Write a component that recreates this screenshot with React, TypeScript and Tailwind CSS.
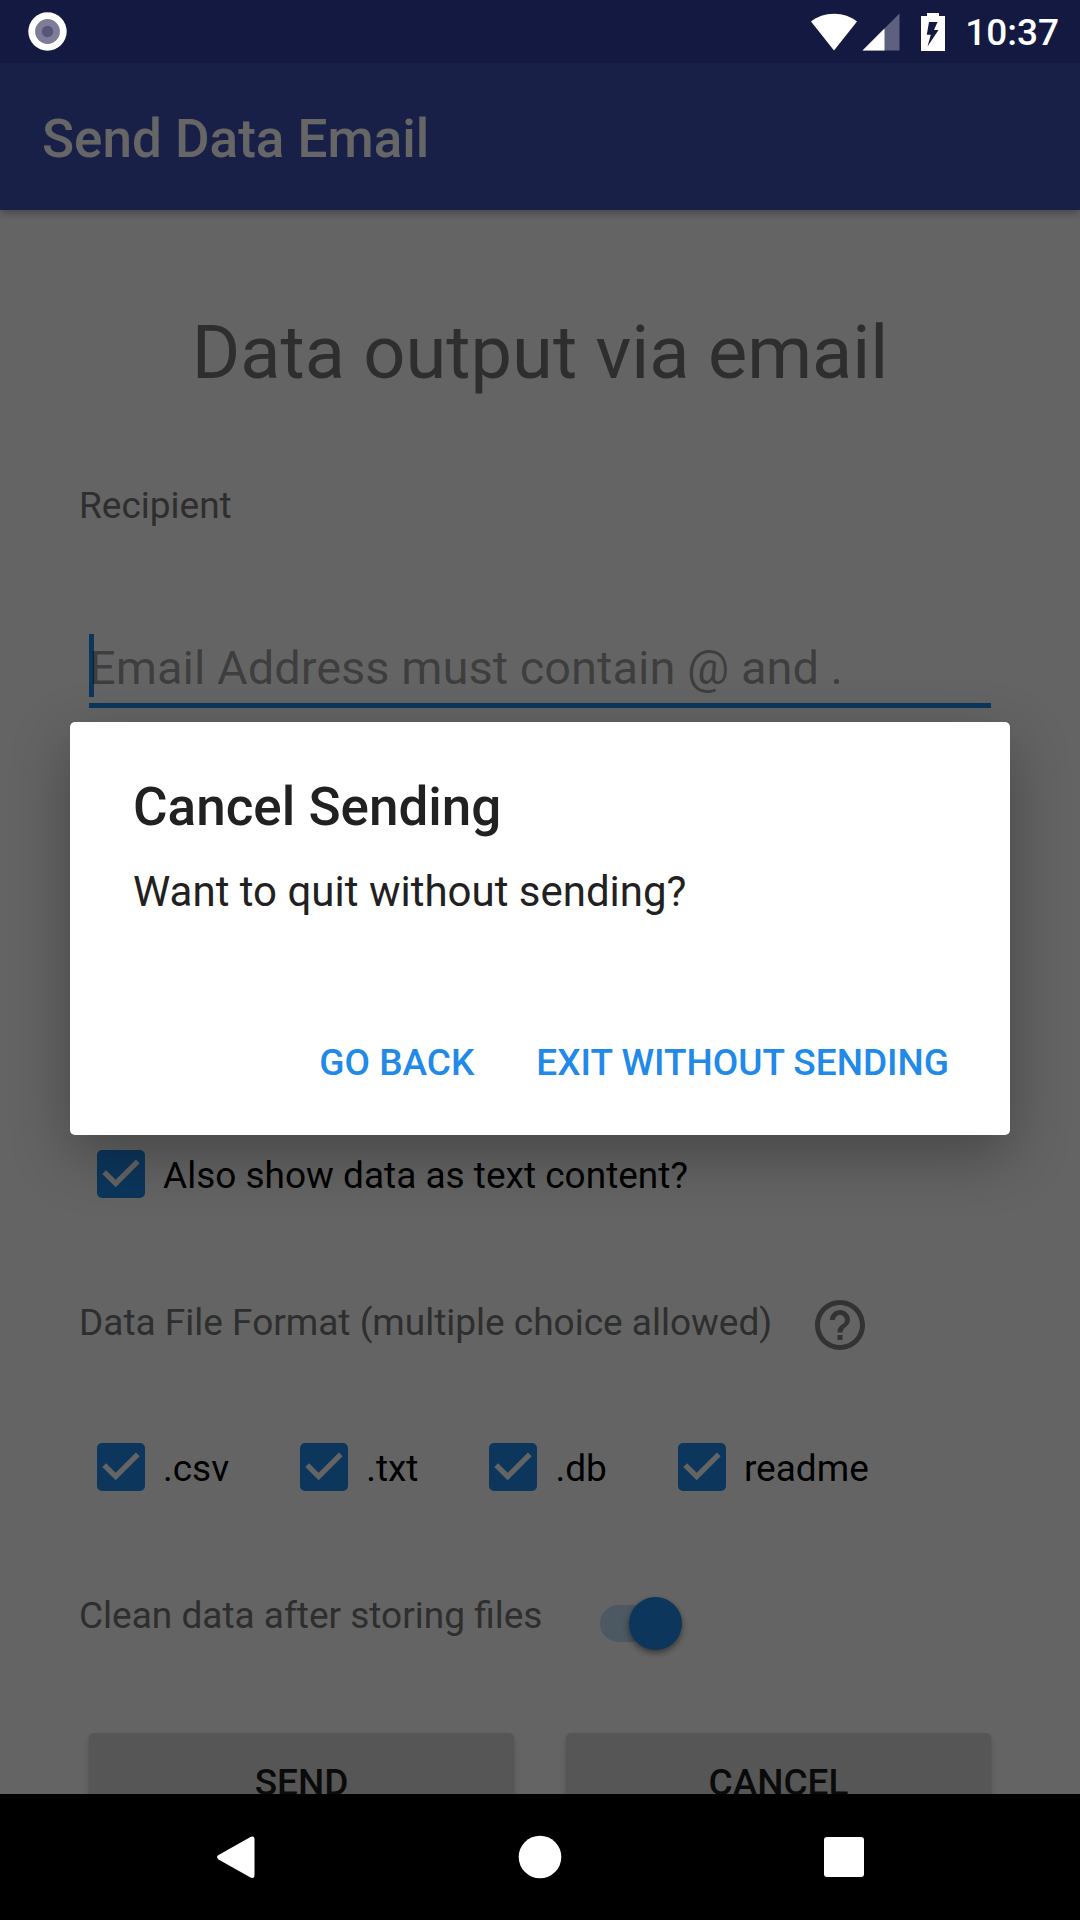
import { useState } from "react";

function StatusBar() {
  return (
    <header className="flex h-[63px] shrink-0 items-center justify-between bg-[#131940] pl-7 pr-[21px] text-white">
      <svg className="size-[39px]" viewBox="0 0 39 39" aria-hidden="true">
        <circle cx="19.5" cy="19.5" r="19.2" fill="#fff" />
        <circle cx="19.5" cy="19.5" r="12.4" fill="#7d7d97" />
        <circle cx="19.5" cy="19.5" r="5.7" fill="#555679" />
      </svg>
      <div className="flex items-center">
        <svg className="mr-1 h-[38px] w-[48px]" viewBox="0 0 48 38" aria-hidden="true">
          <path d="M1 8.6 C7 3.8 15 .8 24 .8 C33 .8 41 3.8 47 8.6 L24 37.6Z" fill="#fff" />
        </svg>
        <svg className="mr-[21px] size-[38px]" viewBox="0 0 38 38" aria-hidden="true">
          <path d="M37.5 .5V37.5H.5Z" fill="#5e6080" />
          <path d="M22.5 15.5V37.5H.5Z" fill="#fff" />
        </svg>
        <svg className="mr-5 h-[38px] w-[24px]" viewBox="0 0 24 38" aria-hidden="true">
          <path d="M6 0H18V3H24V38H0V3H6Z" fill="#fff" />
          <path d="M8 9H16.5L13 17H17.5L6.5 33.5L9.8 21.8H5.8Z" fill="#131940" />
        </svg>
        <span className="pt-[3px] text-[37px] font-medium leading-[44px]">10:37</span>
      </div>
    </header>
  );
}

function CheckOption({ label }: { label: string }) {
  const [checked, setChecked] = useState(true);
  return (
    <label className="flex h-12 items-start gap-[18px] text-[37px] leading-[52px] text-black">
      <span className="relative size-12 shrink-0">
        <input
          type="checkbox"
          checked={checked}
          onChange={() => setChecked(!checked)}
          className="block size-12 appearance-none rounded-[5px] border-[5px] border-[#737373] checked:border-[#1e88e5] checked:bg-[#1e88e5]"
        />
        {checked && (
          <svg className="pointer-events-none absolute inset-0 size-12" viewBox="3 3 18 18" aria-hidden="true">
            <path d="M10 17l-5-5 1.41-1.41L10 14.17l7.59-7.59L19 8l-9 9z" fill="#fafafa" />
          </svg>
        )}
      </span>
      <span>{label}</span>
    </label>
  );
}

function ToggleSwitch({ id }: { id: string }) {
  const [on, setOn] = useState(true);
  return (
    <input
      id={id}
      type="checkbox"
      role="switch"
      checked={on}
      onChange={() => setOn(!on)}
      className="relative mt-3 h-[37px] w-[82px] appearance-none rounded-full bg-[#b9b9b9] before:absolute before:-top-2 before:left-0 before:size-[53px] before:rounded-full before:bg-[#f1f1f1] before:shadow-[0_3px_6px_rgba(0,0,0,0.45)] checked:bg-[#bfdbf5] checked:before:left-[29px] checked:before:bg-[#1e88e5]"
    />
  );
}

function EmailForm() {
  return (
    <main className="flex-1 overflow-hidden bg-[#fafafa] px-[79px] pt-[99px] text-[37px] text-[#737373]">
      <h2 className="text-center text-[74px] leading-[88px]">Data output via email</h2>
      <label htmlFor="recipient" className="mt-[87px] block leading-[44px]">
        Recipient
      </label>
      <div className="relative mx-[10px] mt-[103px]">
        <span className="absolute left-0 top-[3px] h-[63px] w-[5px] bg-[#1e88e5]" />
        <input
          id="recipient"
          type="email"
          placeholder="Email Address must contain @ and ."
          className="relative block h-[77px] w-full border-b-[5px] border-[#1e88e5] bg-transparent text-[47px] text-black outline-none placeholder:text-black/38"
        />
      </div>
      <div className="mt-[442px] px-[18px]">
        <CheckOption label="Also show data as text content?" />
      </div>
      <div className="mt-[97px] flex items-start gap-[38px]">
        <span className="leading-[56px]">Data File Format (multiple choice allowed)</span>
        <button type="button" aria-label="Help">
          <svg className="size-[60px]" viewBox="0 0 24 24" fill="#7f7f7f" aria-hidden="true">
            <path d="M11 18h2v-2h-2v2zm1-16C6.48 2 2 6.48 2 12s4.48 10 10 10 10-4.48 10-10S17.52 2 12 2zm0 18c-4.41 0-8-3.59-8-8s3.59-8 8-8 8 3.59 8 8-3.59 8-8 8zm0-14c-2.21 0-4 1.79-4 4h2c0-1.1.9-2 2-2s2 .9 2 2c0 2-3 1.75-3 5h2c0-2.25 3-2.5 3-5 0-2.21-1.79-4-4-4z" />
          </svg>
        </button>
      </div>
      <div className="mt-[88px] flex gap-[71px] px-[18px]">
        <CheckOption label=".csv" />
        <CheckOption label=".txt" />
        <CheckOption label=".db" />
        <CheckOption label="readme" />
      </div>
      <div className="mt-[102px] flex items-start gap-[58px]">
        <label htmlFor="clean" className="leading-[46px]">
          Clean data after storing files
        </label>
        <ToggleSwitch id="clean" />
      </div>
      <div className="mx-[10px] mt-[91px] grid grid-cols-2 gap-[52px] font-medium text-[#1b1b1b]">
        <button type="button" className="h-[99px] rounded-[5px] bg-[#d7d7d7] shadow-[0_4px_6px_rgba(0,0,0,0.2)]">
          SEND
        </button>
        <button type="button" className="h-[99px] rounded-[5px] bg-[#d7d7d7] shadow-[0_4px_6px_rgba(0,0,0,0.2)]">
          CANCEL
        </button>
      </div>
    </main>
  );
}

function CancelDialog() {
  return (
    <div
      role="dialog"
      aria-labelledby="dialog-title"
      className="mx-[70px] w-full rounded-[5px] bg-white pb-[25px] pt-[54px] text-[#212121] shadow-[0_20px_60px_rgba(0,0,0,0.3)]"
    >
      <h3 id="dialog-title" className="px-[63px] text-[53px] font-medium leading-[62px]">
        Cancel Sending
      </h3>
      <p className="mt-[29px] px-[63px] text-[42px] leading-[50px]">Want to quit without sending?</p>
      <div className="mt-[99px] flex justify-end gap-5 pr-10 text-[37px] font-medium text-[#2189e8]">
        <button type="button" className="h-[94px] px-[21px]">
          GO BACK
        </button>
        <button type="button" className="h-[94px] px-[21px]">
          EXIT WITHOUT SENDING
        </button>
      </div>
    </div>
  );
}

function NavigationBar() {
  return (
    <nav className="flex h-[126px] shrink-0 items-center justify-center gap-[243px] bg-black">
      <button type="button" aria-label="Back">
        <svg className="size-[61px]" viewBox="0 0 61 61" fill="#fff" aria-hidden="true">
          <path d="M44.5 10 Q48.5 8.5 48.5 12.5V48Q48.5 52 44.5 50.5L12.5 32.5Q9.5 30.2 12.5 28Z" />
        </svg>
      </button>
      <button type="button" aria-label="Home">
        <svg className="size-[61px]" viewBox="0 0 61 61" fill="#fff" aria-hidden="true">
          <circle cx="30" cy="30" r="21.3" />
        </svg>
      </button>
      <button type="button" aria-label="Overview">
        <svg className="size-[61px]" viewBox="0 0 61 61" fill="#fff" aria-hidden="true">
          <rect x="10" y="10" width="40" height="40" rx="3" />
        </svg>
      </button>
    </nav>
  );
}

export default function App() {
  return (
    <div className="flex h-screen flex-col overflow-hidden font-[Roboto,sans-serif]">
      <StatusBar />
      <div className="relative flex min-h-0 flex-1 flex-col overflow-hidden">
        <div className="relative z-10 flex h-[147px] shrink-0 items-center bg-[#3f51b5] px-[42px] pt-1 shadow-[0_3px_8px_rgba(0,0,0,0.3)]">
          <h1 className="text-[53px] font-medium leading-[62px] text-white">Send Data Email</h1>
        </div>
        <EmailForm />
        <div className="absolute inset-0 z-20 flex items-center justify-center bg-black/60">
          <CancelDialog />
        </div>
      </div>
      <NavigationBar />
    </div>
  );
}
